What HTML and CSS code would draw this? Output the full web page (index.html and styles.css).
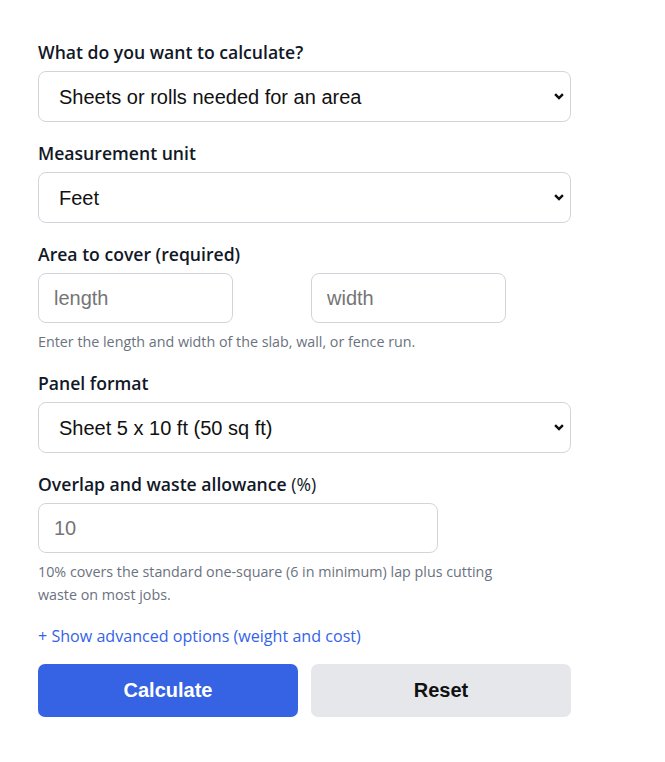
FILE: index.html
```html
<!DOCTYPE html>
<html lang="en">
<head>
<meta charset="utf-8">
<title>Calculator</title>
<link rel="stylesheet" href="styles.css">
</head>
<body>
<form class="calc">
  <div class="field">
    <label class="label" for="mode">What do you want to calculate?</label>
    <select id="mode" class="control select">
      <option>Sheets or rolls needed for an area</option>
    </select>
  </div>
  <div class="field">
    <label class="label" for="unit">Measurement unit</label>
    <select id="unit" class="control select">
      <option>Feet</option>
    </select>
  </div>
  <div class="field with-help">
    <label class="label">Area to cover (required)</label>
    <div class="pair">
      <input class="control short" type="text" placeholder="length">
      <input class="control short" type="text" placeholder="width">
    </div>
    <p class="help">Enter the length and width of the slab, wall, or fence run.</p>
  </div>
  <div class="field">
    <label class="label" for="panel">Panel format</label>
    <select id="panel" class="control select">
      <option>Sheet 5 x 10 ft (50 sq ft)</option>
    </select>
  </div>
  <div class="field with-help">
    <label class="label" for="waste">Overlap and waste allowance <span class="unit">(%)</span></label>
    <input id="waste" class="control medium" type="text" placeholder="10">
    <p class="help">10% covers the standard one-square (6 in minimum) lap plus cutting waste on most jobs.</p>
  </div>
  <a class="toggle" href="#">+ Show advanced options (weight and cost)</a>
  <div class="actions">
    <button type="button" class="btn primary">Calculate</button>
    <button type="button" class="btn secondary">Reset</button>
  </div>
</form>
</body>
</html>
```

FILE: styles.css
```css
html, body {
  margin: 0;
  padding: 0;
  background: #ffffff;
}
body {
  font-family: "Open Sans", "Noto Sans", sans-serif;
  color: #111827;
}
.calc {
  width: 533px;
  padding: 40px 0 0 38px;
}
.field {
  display: flex;
  flex-direction: column;
  align-items: flex-start;
  margin-bottom: 19px;
}
.field.with-help {
  margin-bottom: 18px;
}
.label {
  font-size: 17.6px;
  font-weight: 600;
  line-height: 24px;
  margin-bottom: 7px;
  color: #111827;
}
.unit {
  font-weight: 500;
}
.control {
  box-sizing: border-box;
  font-family: "Liberation Sans", Arial, sans-serif;
  font-size: 20px;
  color: #111111;
  background: #ffffff;
  border: 1px solid #d1d5db;
  border-radius: 8px;
  padding: 0 15px;
  outline: none;
}
.control::placeholder {
  color: #757575;
}
.select {
  width: 533px;
  height: 51px;
  padding: 0 36px 0 20px;
  appearance: none;
  -webkit-appearance: none;
  background-image: url("data:image/svg+xml,%3Csvg xmlns='http://www.w3.org/2000/svg' width='10' height='7' viewBox='0 0 10 7'%3E%3Cpath d='M1.1 1.2l3.9 3.9 3.9-3.9' fill='none' stroke='%23111' stroke-width='2.5'/%3E%3C/svg%3E");
  background-repeat: no-repeat;
  background-position: right 6px center;
  background-size: 10px 7px;
}
.pair {
  display: flex;
  gap: 78px;
}
.short {
  width: 195px;
  height: 50px;
}
.medium {
  width: 400px;
  height: 50px;
}
.help {
  margin: 7px 0 0;
  font-size: 14.3px;
  line-height: 23px;
  color: #6b7280;
  max-width: 480px;
}
.toggle {
  display: block;
  font-size: 16.1px;
  font-weight: 500;
  line-height: 24px;
  color: #3563e9;
  text-decoration: none;
  margin: 0 0 16px;
}
.actions {
  display: flex;
  gap: 13px;
}
.btn {
  flex: 1;
  height: 53px;
  border: none;
  border-radius: 7px;
  font-family: "Liberation Sans", Arial, sans-serif;
  font-size: 20px;
  font-weight: 700;
  cursor: pointer;
}
.primary {
  background: #3563e3;
  color: #ffffff;
}
.secondary {
  background: #e5e7eb;
  color: #111111;
}
```
